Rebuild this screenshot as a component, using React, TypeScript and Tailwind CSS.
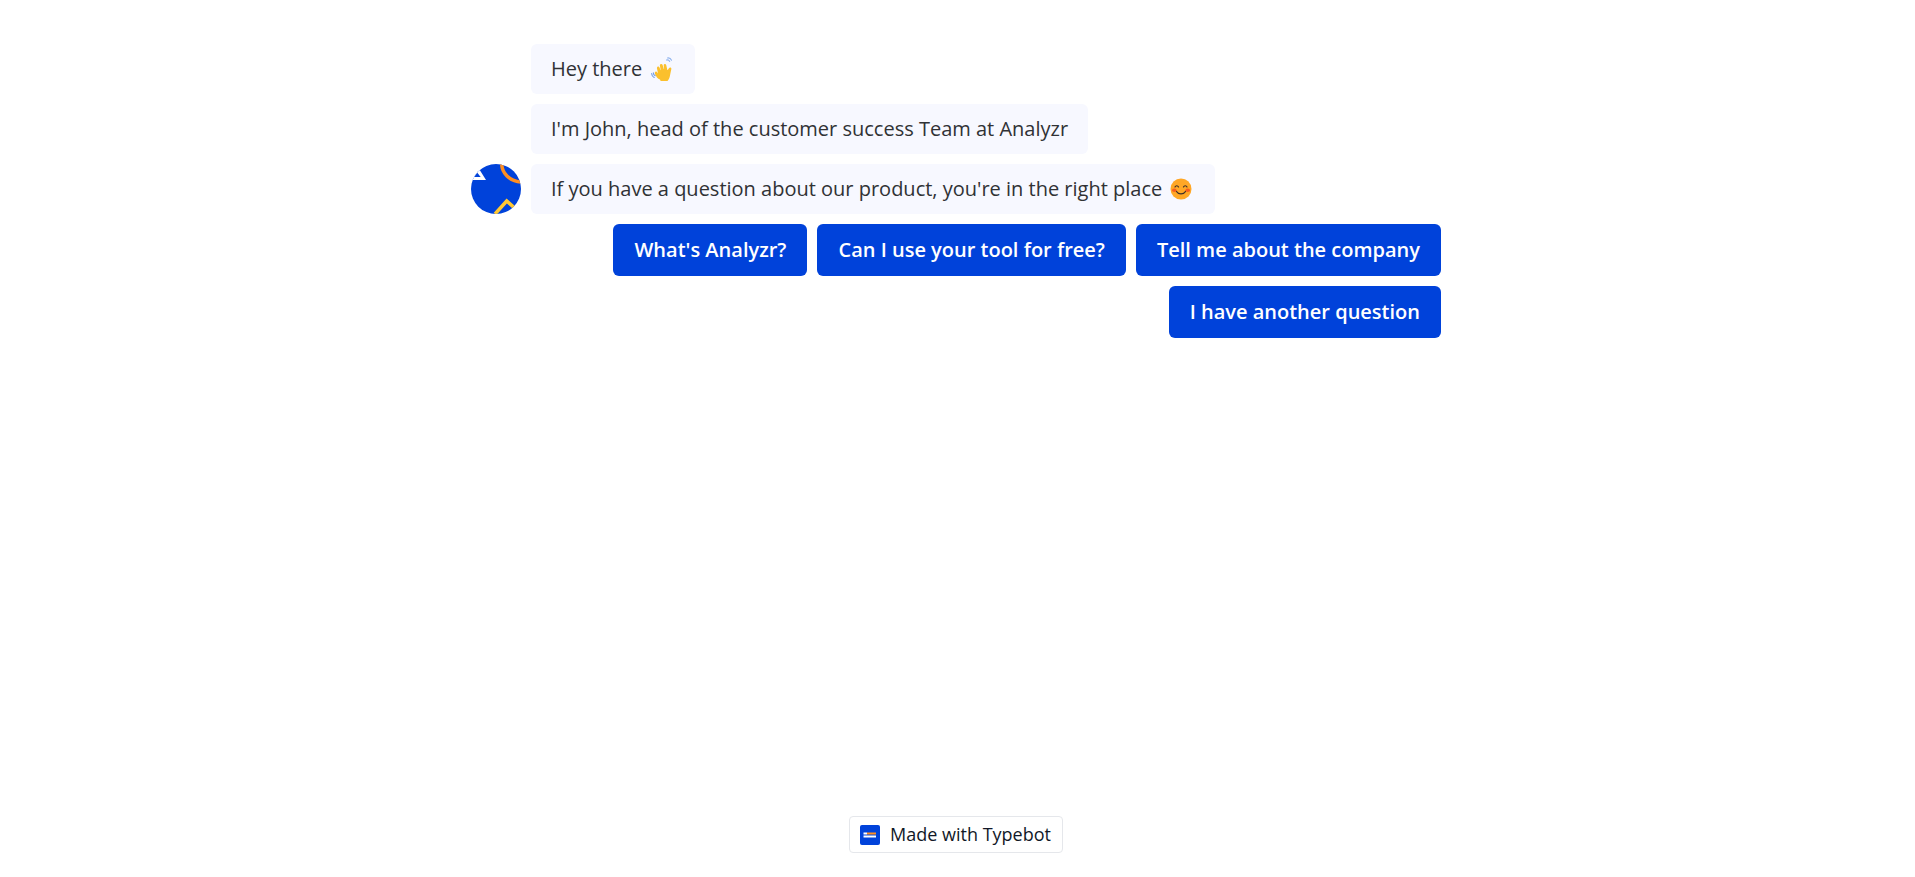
const chatFont = { fontFamily: '"Open Sans", sans-serif' };

const WaveEmoji = () => (
  <svg viewBox="0 0 24 24" className="inline-block w-[24px] h-[24px] ml-[9px] align-[-5px]">
    <path
      d="M9 22.500c-2.300-.8-4-3-5-5.500-.5-1.200-.2-2 .5-2.300.7-.3 1.300 0 1.800.8l.7 1.100-1-5.200c-.2-1 .2-1.600.9-1.800.8-.2 1.300.2 1.600 1l1 2.600.2-.1-.8-4.300c-.2-1 .2-1.600 1-1.800.8-.2 1.400.2 1.700 1l1.200 4 .3-.1-.4-3.300c-.1-1 .3-1.500 1-1.600.8-.1 1.300.3 1.500 1.100l1.200 4.800.4.100 1.100-1.700c.5-.7 1.100-1 1.700-.7.7.3.900.9.700 1.700l-1 4.800c-.6 3.400-1 5.200-2.800 6.800-2.300 1.900-4.800 1.700-6.500.9z"
      fill="#fbc02d"
    />
    <path d="M15.500 3c1.300-.4 2.600.2 3.200 1.400M16.500 1c1.700-.3 3.300.6 4 2.200" stroke="#8fb3ee" strokeWidth="1.100" fill="none" strokeLinecap="round" />
    <path d="M2.300 15.800c0 1.300.7 2.400 1.900 3M.6 16.500c.1 1.700 1 3.200 2.600 4" stroke="#6f9be8" strokeWidth="1.100" fill="none" strokeLinecap="round" />
  </svg>
);

const SmileEmoji = () => (
  <svg viewBox="0 0 24 24" className="inline-block w-[24px] h-[24px] ml-[7px] mr-[2px] align-[-5px]">
    <circle cx="12" cy="12" r="10.500" fill="#ffa726" />
    <ellipse cx="5.300" cy="13.300" rx="2.300" ry="1.700" fill="#f4511e" opacity="0.85" />
    <ellipse cx="18.700" cy="13.300" rx="2.300" ry="1.700" fill="#f4511e" opacity="0.85" />
    <path d="M6 10c.7-1.700 2.800-1.700 3.500 0M14.500 10c.7-1.700 2.800-1.700 3.500 0" stroke="#40312a" strokeWidth="1.200" fill="none" strokeLinecap="round" />
    <path d="M7.500 14.500c1.800 3.200 7.200 3.200 9 0" stroke="#40312a" strokeWidth="1.300" fill="none" strokeLinecap="round" />
  </svg>
);

const Avatar = () => (
  <svg viewBox="0 0 50 50" className="w-[50px] h-[50px] rounded-full shrink-0">
    <rect width="50" height="50" fill="#0042da" />
    <path d="M0 16 L15 16 L8.300 5.300 Z" fill="white" />
    <path d="M3 13 L9.700 13 L6.300 8.700 Z" fill="#0042da" />
    <path d="M30.700 0 C31 9 38 17 50 18" stroke="#ff8e20" strokeWidth="3.500" fill="none" />
    <path d="M24 50 L35.700 37 L47 47" stroke="#ffc833" strokeWidth="3.500" fill="none" />
  </svg>
);

const Bubble = ({ children }: { children: React.ReactNode }) => (
  <div className="h-[50px] flex items-center px-[20px] bg-[#f7f8ff] rounded-[6px] text-[#303235] text-[20px] whitespace-nowrap">
    <span>{children}</span>
  </div>
);

const ChoiceButton = ({ text }: { text: string }) => (
  <button className="h-[52px] px-[21px] bg-[#0042da] rounded-[6px] text-white text-[20px] font-semibold whitespace-nowrap">
    {text}
  </button>
);

export default function App() {
  return (
    <div className="h-screen bg-white pr-[3px] flex flex-col items-center" style={chatFont}>
      <div className="w-[970px] flex-1 pt-[44px] flex flex-col gap-[10px]">
        <div className="pl-[60px] flex flex-col items-start gap-[10px]">
          <Bubble>
            Hey there
            <WaveEmoji />
          </Bubble>
          <Bubble>I'm John, head of the customer success Team at Analyzr</Bubble>
        </div>
        <div className="flex items-start gap-[10px]">
          <Avatar />
          <Bubble>
            If you have a question about our product, you're in the right place
            <SmileEmoji />
          </Bubble>
        </div>
        <div className="flex flex-wrap justify-end gap-[10px] pl-[60px]">
          <ChoiceButton text="What's Analyzr?" />
          <ChoiceButton text="Can I use your tool for free?" />
          <ChoiceButton text="Tell me about the company" />
          <ChoiceButton text="I have another question" />
        </div>
      </div>
      <a className="mb-[24px] h-[37px] pl-[10px] pr-[11px] flex items-center gap-[10px] bg-white border border-[#e5e7eb] rounded-[4px] text-[#111827] text-[18px] font-medium">
        <svg viewBox="0 0 20 20" className="w-[20px] h-[20px]">
          <rect width="20" height="20" rx="2" fill="#0042da" />
          <rect x="3.500" y="7.500" width="3.500" height="2" fill="white" />
          <rect x="7" y="7.500" width="9" height="2" fill="#ff8e20" />
          <rect x="3.500" y="10.500" width="12.500" height="2" fill="white" />
        </svg>
        Made with Typebot
      </a>
    </div>
  );
}
